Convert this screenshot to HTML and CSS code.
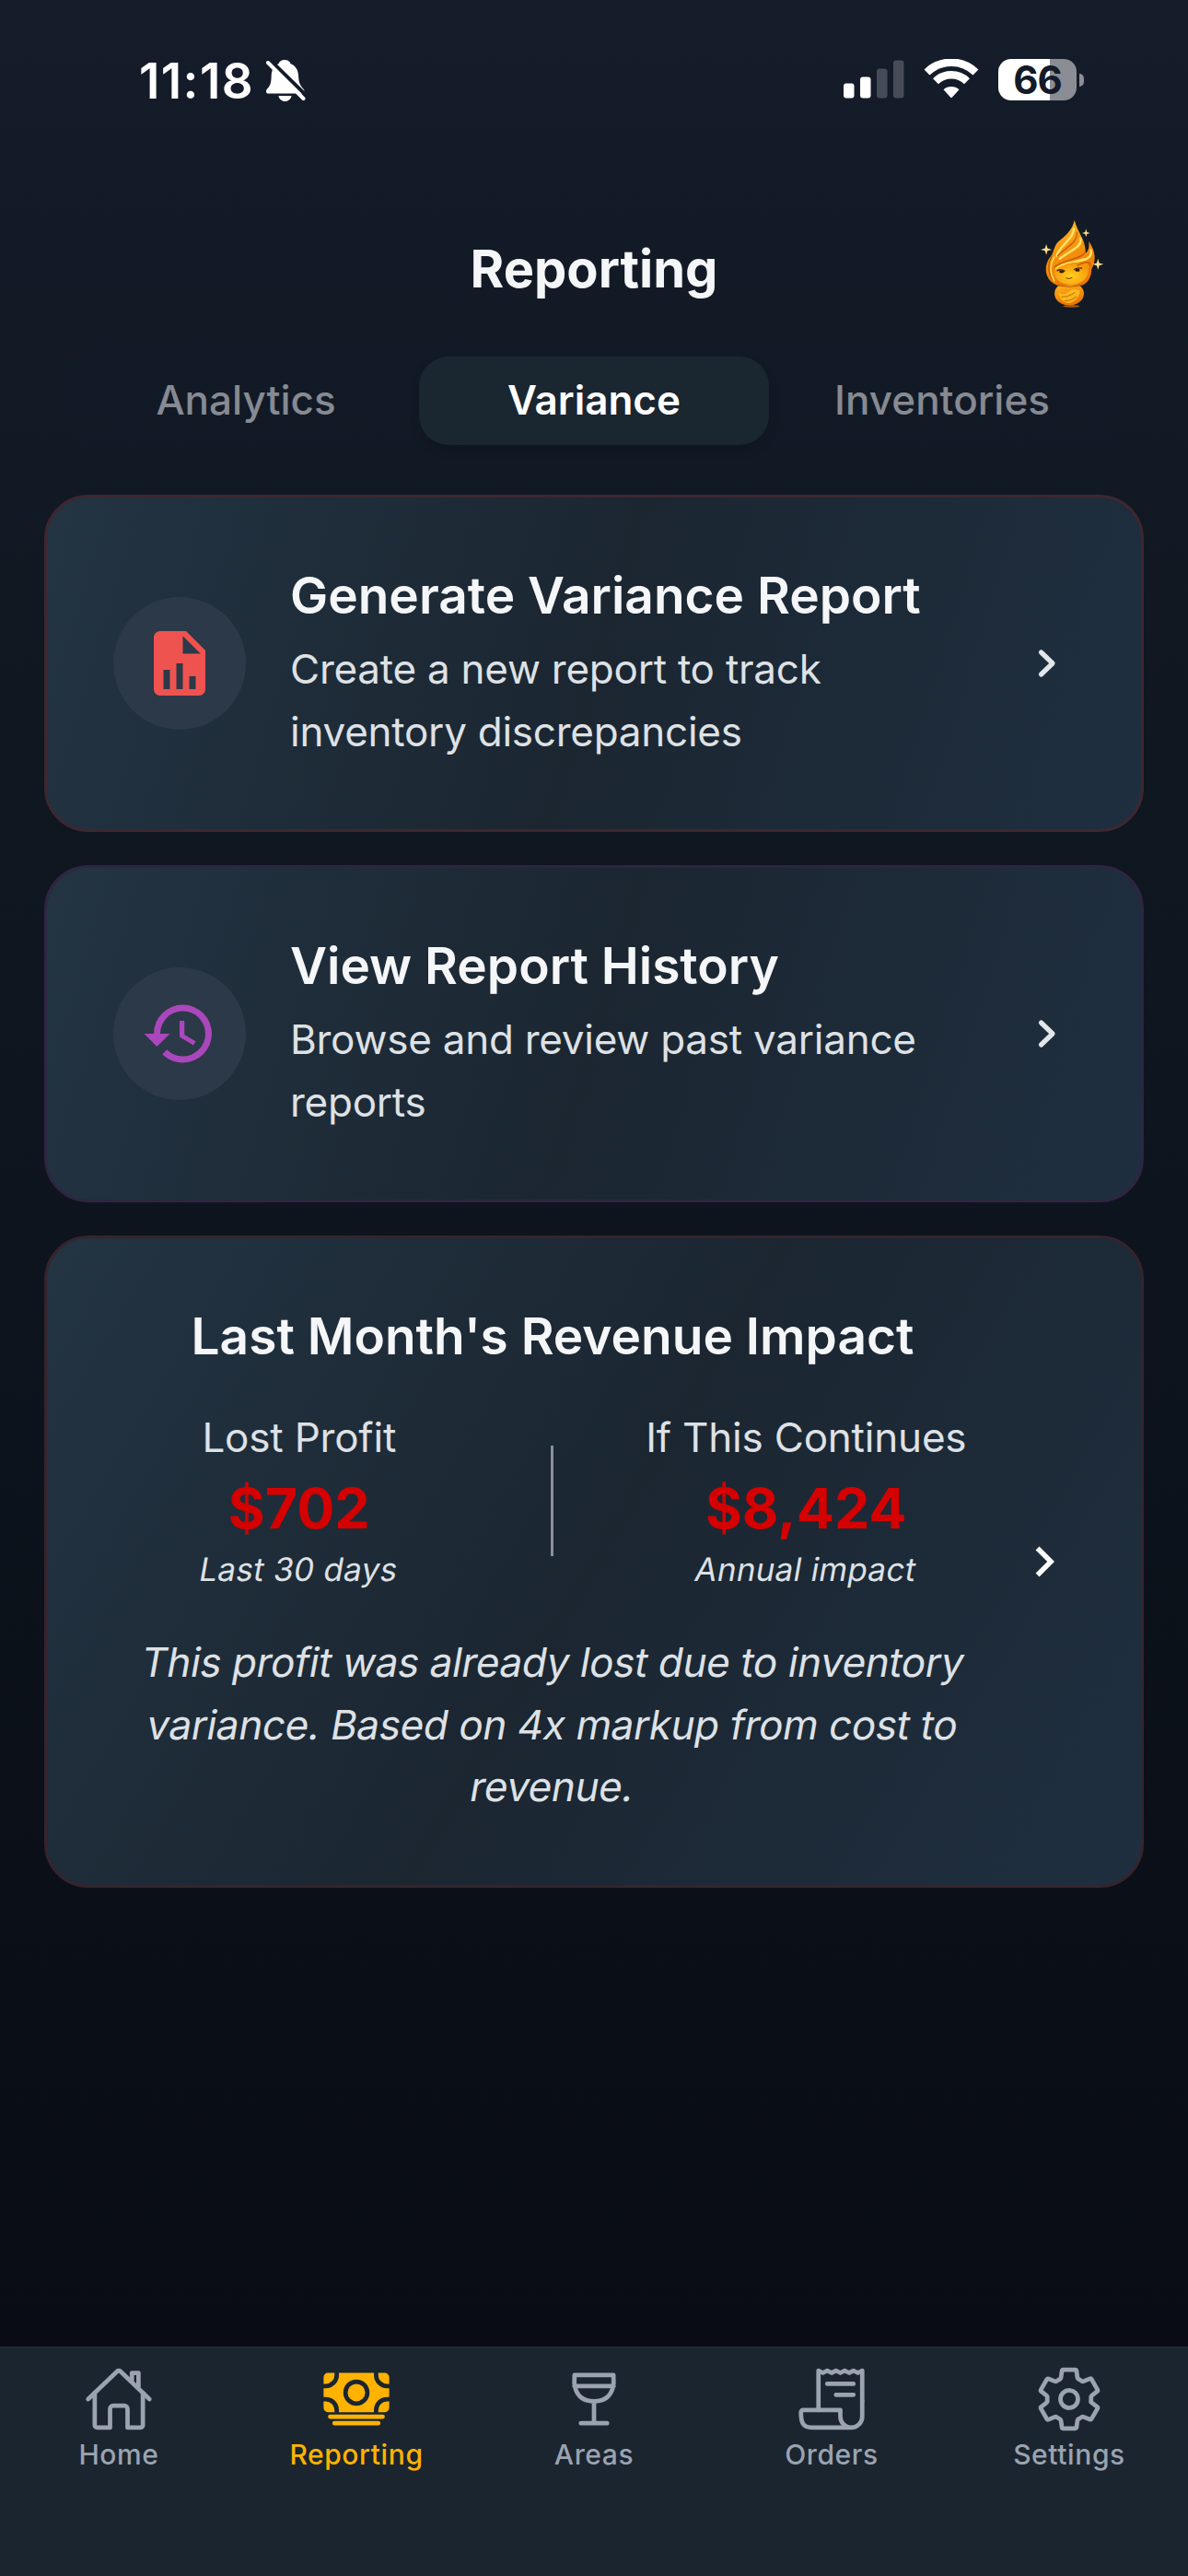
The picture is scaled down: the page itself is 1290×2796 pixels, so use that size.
FILE: index.html
```html
<!DOCTYPE html>
<html lang="en">
<head>
<meta charset="utf-8">
<title>Reporting</title>
<link rel="stylesheet" href="styles.css">
</head>
<body>
<div class="status">
  <div class="status-left">
    <span class="time">11:18</span>
    <svg class="bell" viewBox="0 0 44 48" width="44" height="48">
      <path fill="#fff" d="M21 1c3.500 0 6 1.800 6.600 4.200 5 1.800 8.100 6.500 8.400 12.300.3 9 2.500 11.500 5 14.500 1.300 1.600 1.500 2.200 1.500 3.200 0 1.500-1 2.300-2.500 2.300H3.500C1.800 37.500 1 36.600 1 35.200c0-1.200.4-2 1.700-3.400C5.500 28.800 6.500 26 6.700 17.500 7 11.500 9.700 7 14.500 5.200 15.100 2.800 17.600 1 21 1zM14.500 40h14c-.6 3.600-3.400 6-7 6s-6.400-2.400-7-6z"/>
      <path d="M4 0 46 41" stroke="#141b28" stroke-width="4"/>
      <path d="M3 4 41.500 43" stroke="#fff" stroke-width="4" stroke-linecap="round"/>
    </svg>
  </div>
  <div class="status-right">
    <svg class="signal" viewBox="0 0 66 42" width="66" height="42">
      <rect x="0" y="25.500" width="11.500" height="16" rx="3" fill="#fff"/>
      <rect x="18" y="18.500" width="11.500" height="23" rx="3" fill="#fff"/>
      <rect x="36" y="9.500" width="11.500" height="32" rx="3" fill="#464c57"/>
      <rect x="54" y=".5" width="11.500" height="41" rx="3" fill="#464c57"/>
    </svg>
    <svg class="wifi" viewBox="0 0 60 44" width="60" height="44">
      <g fill="none" stroke="#fff">
        <path d="M3.500 14.500A38 38 0 0 1 56.500 14.500" stroke-width="8.500"/>
        <path d="M13 24.200A24.500 24.500 0 0 1 47 24.200" stroke-width="8.500"/>
      </g>
      <path d="M21.500 33.300A12.500 12.500 0 0 1 38.500 33.300L31 41.600Q30 42.600 29 41.600Z" fill="#fff"/>
    </svg>
    <div class="battery"><div class="cell">66</div><div class="nub"></div></div>
  </div>
</div>

<header class="header">
  <h1 class="title">Reporting</h1>
  <svg class="mascot" viewBox="60 40 210 310" width="70" height="103">
    <defs>
      <linearGradient id="fire" x1="0" y1="0" x2=".3" y2="1"><stop offset="0" stop-color="#ffc53a"/><stop offset=".45" stop-color="#f99a10"/><stop offset="1" stop-color="#e87705"/></linearGradient>
      <radialGradient id="skin" cx=".5" cy=".6" r=".6"><stop offset="0" stop-color="#ffcf1e"/><stop offset="1" stop-color="#f4960b"/></radialGradient>
    </defs>
    <ellipse cx="160" cy="333" rx="28" ry="4" fill="#a85a08"/>
    <ellipse cx="153" cy="292" rx="48" ry="38" fill="url(#fire)"/>
    <path fill="#ffcb2a" d="M118 286C130 300 142 292 154 284 166 276 178 276 188 284 186 304 170 322 152 324 132 320 118 306 118 286Z" opacity=".7"/>
    <path fill="none" stroke="#c96a06" stroke-width="3" d="M126 302Q146 306 172 288M138 316Q158 316 178 302"/>
    <path fill="url(#fire)" d="M170 52C164 84 140 104 120 120 104 134 104 150 96 166 78 186 70 216 84 240 92 254 106 264 122 266L196 264C214 256 226 238 226 212 240 188 242 156 217 121 220 142 214 154 206 160 208 118 184 100 170 52Z"/>
    <path fill="url(#skin)" d="M106 208C124 200 180 190 214 192 222 226 212 258 158 264 118 260 98 240 106 208Z"/>
    <g fill="none" stroke-linecap="round">
      <path stroke="#ffe36a" stroke-width="7" d="M168 80C166 116 122 134 112 168M190 112C196 142 152 152 122 178M224 150C230 180 196 184 168 188"/>
      <path stroke="#c65a04" stroke-width="4" d="M178 92C182 126 140 142 116 168M204 158C190 182 136 178 106 204M96 168C82 196 84 226 98 244M222 200C220 184 200 190 180 200"/>
      <path stroke="#ffdc50" stroke-width="5" d="M104 172C90 196 88 222 104 250M202 178C176 190 132 188 110 210"/>
      <path stroke="#b85a06" stroke-width="3" d="M116 266Q155 274 192 265"/>
      <path stroke="#4a2204" stroke-width="4" d="M114 217Q124 210 138 218M169 213Q180 206 194 209"/>
      <path stroke="#7a3404" stroke-width="3" d="M143 241Q153 247 162 240"/>
    </g>
    <ellipse cx="128" cy="220" rx="8" ry="5" fill="#3c1c05"/><ellipse cx="180" cy="215" rx="8" ry="5" fill="#3c1c05"/>
    <path fill="#ffe08a" d="M208 81l3 10 10 3-10 3-3 10-3-10-10-3 10-3zM78 130l4 14 14 4-14 4-4 14-4-14-14-4 14-4zM247 178l4 14 14 4-14 4-4 14-4-14-14-4 14-4z"/>
  </svg>
</header>

<nav class="tabs">
  <div class="tab">Analytics</div>
  <div class="tab active">Variance</div>
  <div class="tab">Inventories</div>
</nav>

<main class="cards">
  <section class="card red">
    <div class="disc"><svg viewBox="0 0 24 24" width="84" height="84" fill="#ef5350"><path d="M13,9H18.500L13,3.500V9M6,2H14L20,8V20A2,2 0 0,1 18,22H6C4.890,22 4,21.100 4,20V4C4,2.890 4.890,2 6,2M7,20H9V14H7V20M11,20H13V12H11V20M15,20H17V16H15V20Z"/></svg></div>
    <div class="copy">
      <h2 class="card-title">Generate Variance Report</h2>
      <p class="desc">Create a new report to track<br>inventory discrepancies</p>
    </div>
    <svg class="chev" viewBox="0 0 66 66" width="66" height="66"><path d="M29.500 21 42 33 29.500 45" fill="none" stroke="#e3e6ea" stroke-width="5.200" stroke-linecap="round" stroke-linejoin="round"/></svg>
  </section>

  <section class="card purple">
    <div class="disc"><svg viewBox="0 0 24 24" width="84" height="84" fill="#ab47bc"><path d="M13.500,8H12V13L16.280,15.540L17,14.330L13.500,12.250V8M13,3A9,9 0 0,0 4,12H1L4.960,16.030L9,12H6A7,7 0 0,1 13,5A7,7 0 0,1 20,12A7,7 0 0,1 13,19C11.070,19 9.320,18.210 8.060,16.940L6.640,18.360C8.270,20 10.500,21 13,21A9,9 0 0,0 22,12A9,9 0 0,0 13,3"/></svg></div>
    <div class="copy">
      <h2 class="card-title">View Report History</h2>
      <p class="desc">Browse and review past variance<br>reports</p>
    </div>
    <svg class="chev" viewBox="0 0 66 66" width="66" height="66"><path d="M29.500 21 42 33 29.500 45" fill="none" stroke="#e3e6ea" stroke-width="5.200" stroke-linecap="round" stroke-linejoin="round"/></svg>
  </section>

  <section class="card impact">
    <div class="impact-body">
      <h2 class="card-title">Last Month's Revenue Impact</h2>
      <div class="stats">
        <div class="stat">
          <div class="label">Lost Profit</div>
          <div class="value">$702</div>
          <div class="period"><span class="slant">Last 30 days</span></div>
        </div>
        <div class="rule"></div>
        <div class="stat">
          <div class="label">If This Continues</div>
          <div class="value">$8,424</div>
          <div class="period"><span class="slant">Annual impact</span></div>
        </div>
      </div>
      <p class="note"><span class="slant">This profit was already lost due to inventory</span><br><span class="slant">variance. Based on 4x markup from cost to</span><br><span class="slant">revenue.</span></p>
    </div>
    <svg class="chev" viewBox="0 0 24 24" width="66" height="66" fill="#fff"><path d="M8.590,16.580L13.170,12L8.590,7.410L10,6L16,12L10,18L8.590,16.580Z"/></svg>
  </section>
</main>

<footer class="tabbar">
  <div class="item">
    <svg class="icon" viewBox="0 0 512 512"><path d="M80 212v236a16 16 0 0016 16h96V328a24 24 0 0124-24h80a24 24 0 0124 24v136h96a16 16 0 0016-16V212"/><path d="M480 256L266.890 52c-5-5.280-16.690-5.340-21.780 0L32 256M400 179V64h-48v69"/></svg>
    <span class="name">Home</span>
  </div>
  <div class="item on">
    <svg class="icon solid" viewBox="0 0 512 512"><path d="M448 400H64a16 16 0 010-32h384a16 16 0 010 32zM416 448H96a16 16 0 010-32h320a16 16 0 010 32zM32 272H16v48a32 32 0 0032 32h48v-16a64.070 64.070 0 00-64-64z"/><path d="M480 240h16v-64h-16a96.110 96.110 0 01-96-96V64H128v16a96.110 96.110 0 01-96 96H16v64h16a96.110 96.110 0 0196 96v16h256v-16a96.110 96.110 0 0196-96zm-224 64a96 96 0 1196-96 96.110 96.110 0 01-96 96z"/><circle cx="256" cy="208" r="64"/><path d="M416 336v16h48a32 32 0 0032-32v-48h-16a64.070 64.070 0 00-64 64zM480 144h16V96a32 32 0 00-32-32h-48v16a64.070 64.070 0 0064 64zM96 80V64H48a32 32 0 00-32 32v48h16a64.070 64.070 0 0064-64z"/></svg>
    <span class="name">Reporting</span>
  </div>
  <div class="item">
    <svg class="icon" viewBox="0 0 512 512"><path d="M398.570 80H113.430v16S87.510 272 256 272 398.570 96 398.570 96zM256 272v160M352 432H160M112 160h288"/></svg>
    <span class="name">Areas</span>
  </div>
  <div class="item">
    <svg class="icon" viewBox="0 0 512 512"><path d="M160 336V48l32 16 32-16 31.940 16 32.370-16L320 64l31.790-16 31.930 16L416 48l32.010 16L480 48v224"/><path d="M480 272v112a80 80 0 01-80 80h0a80 80 0 01-80-80v-48H48a15.860 15.860 0 00-16 16c0 64 6.740 112 80 112h288M224 144h192M288 224h128"/></svg>
    <span class="name">Orders</span>
  </div>
  <div class="item">
    <svg class="icon" viewBox="0 0 512 512"><path d="M262.290 192.310a64 64 0 1057.400 57.400 64.130 64.130 0 00-57.400-57.400zM416.390 256a154.340 154.340 0 01-1.530 20.790l45.210 35.460a10.810 10.810 0 012.450 13.750l-42.770 74a10.810 10.810 0 01-13.140 4.590l-44.900-18.080a16.110 16.110 0 00-15.170 1.750A164.480 164.480 0 01325 400.800a15.940 15.940 0 00-8.820 12.140l-6.730 47.890a11.080 11.080 0 01-10.680 9.170h-85.540a11.110 11.110 0 01-10.690-8.870l-6.720-47.820a16.070 16.070 0 00-9-12.220 155.300 155.300 0 01-21.460-12.570 16 16 0 00-15.110-1.710l-44.890 18.070a10.810 10.810 0 01-13.140-4.580l-42.770-74a10.800 10.800 0 012.450-13.750l38.210-30a16.050 16.050 0 006-14.080c-.36-4.170-.58-8.330-.58-12.500s.21-8.270.58-12.350a16 16 0 00-6.070-13.940l-38.190-30A10.810 10.810 0 0149.480 186l42.770-74a10.810 10.810 0 0113.140-4.590l44.900 18.080a16.110 16.110 0 0015.170-1.750A164.480 164.480 0 01187 111.200a15.940 15.940 0 008.820-12.140l6.730-47.890A11.080 11.080 0 01213.230 42h85.540a11.110 11.110 0 0110.690 8.870l6.720 47.820a16.070 16.070 0 009 12.220 155.300 155.300 0 0121.460 12.570 16 16 0 0015.110 1.710l44.890-18.070a10.810 10.810 0 0113.140 4.580l42.770 74a10.800 10.800 0 01-2.450 13.750l-38.210 30a16.050 16.050 0 00-6.050 14.080c.33 4.140.55 8.300.55 12.470z"/></svg>
    <span class="name">Settings</span>
  </div>
</footer>
</body>
</html>
```

FILE: styles.css
```css
* { box-sizing: border-box; margin: 0; }

body {
  width: 1290px;
  height: 2796px;
  display: flex;
  flex-direction: column;
  overflow: hidden;
  background: linear-gradient(180deg, #151c2a 0%, #0f1720 30%, #0d141d 50%, #090c14 90%);
  color: #f5f6f8;
  font-family: Inter, "Liberation Sans", sans-serif;
}

/* status bar */
.status {
  height: 176px;
  display: flex;
  justify-content: space-between;
  padding: 64px 113px 0 151px;
}
.status-left, .status-right { display: flex; }
.status-left { gap: 12px; }
.time { font-size: 53px; line-height: 48px; font-weight: 600; color: #fff; letter-spacing: 1.4px; }
.signal { margin: 1px 21px 0 0; }
.wifi { margin-right: 21px; }
.battery { display: flex; align-items: center; gap: 3px; height: 45px; }
.cell {
  width: 85px;
  height: 45px;
  border-radius: 14px;
  background: linear-gradient(90deg, #fff 56px, #8b8d94 56px);
  color: #141b28;
  font-size: 42px;
  line-height: 46px;
  font-weight: 700;
  letter-spacing: -1px;
  text-align: center;
}
.nub { width: 5px; height: 14px; border-radius: 0 7px 7px 0; background: #8b8d94; }

/* header */
.header {
  height: 200px;
  display: grid;
  grid-template-columns: 1fr auto 1fr;
  align-items: center;
  padding: 0 90px;
}
.title { grid-column: 2; font-size: 56px; line-height: 68px; font-weight: 700; margin-top: 32px; color: #f5f6f8; }
.mascot { justify-self: end; margin-top: 20px; }

/* segmented tabs */
.tabs {
  display: grid;
  grid-template-columns: repeat(3, 1fr);
  margin: 0 75px;
  height: 119px;
  padding: 11px 3px 12px;
  border-radius: 36px;
  background: rgba(26, 36, 48, .12);
}
.tab {
  display: grid;
  place-items: center;
  padding-bottom: 2px;
  border-radius: 32px;
  color: #868a92;
  font-size: 44px;
  line-height: 54px;
  font-weight: 500;
}
.active { margin: 0 -1px; background: #1a2630; color: #fff; font-weight: 600; box-shadow: 0 6px 12px rgba(0, 0, 0, .12); }

/* cards */
.cards { display: flex; flex-direction: column; gap: 36px; padding: 42px 48px 0; flex: 1; }
.card {
  height: 366px;
  display: flex;
  align-items: center;
  padding: 0 72px;
  border: 3px solid;
  border-radius: 48px;
  background: linear-gradient(107deg, #233443, #1b2631 50%, #1f2f40) border-box;
}
.red { border-color: #3e2730; }
.purple { border-color: #2f2542; }
.disc {
  width: 144px;
  height: 144px;
  flex: none;
  display: grid;
  place-items: center;
  border-radius: 50%;
  background: #2c3948;
}
.copy { flex: 1; margin-left: 48px; }
.card-title { font-size: 55px; line-height: 68px; font-weight: 600; white-space: nowrap; }
.desc { margin-top: 13px; font-size: 44px; line-height: 67.5px; letter-spacing: -0.25px; color: #dee1e5; white-space: nowrap; }
.chev { flex: none; }

.impact {
  height: 708px;
  border-color: #36242c;
  background: linear-gradient(120.6deg, #233443, #1b2631 50%, #1f2f40) border-box;
}
.impact-body { width: 954px; margin-right: 24px; text-align: center; }
.stats { display: flex; align-items: center; margin: 49px 0 47px; }
.stat { flex: 1; }
.rule { width: 3px; height: 120px; margin: 0 73px 0 71px; background: #8a8f9b; }
.label { font-size: 44px; line-height: 54px; letter-spacing: -0.2px; color: #dee1e5; }
.value { margin-top: 14px; font-size: 61px; line-height: 72px; font-weight: 700; color: #d50000; }
.period { margin-top: 9px; font-size: 35px; line-height: 42px; letter-spacing: 0.3px; color: #dee1e5; }
.note { font-size: 44px; line-height: 67.5px; letter-spacing: -0.4px; color: #dee1e5; white-space: nowrap; }
/* obliqued upright letterforms instead of the cursive italic face */
.slant { display: inline-block; transform: skewX(-10deg); }

/* bottom bar */
.tabbar {
  height: 249px;
  display: grid;
  grid-template-columns: repeat(5, 1fr);
  border-top: 1px solid #27323c;
  background: #1a2530;
}
.item {
  display: flex;
  flex-direction: column;
  align-items: center;
  padding-top: 18px;
  color: #9ba3b0;
  font-size: 30px;
  line-height: 36px;
  font-weight: 500;
}
.name { margin-top: 4px; letter-spacing: 0.6px; }
.on { color: #ffb300; }
.icon { width: 76px; height: 76px; fill: none; stroke: currentColor; stroke-width: 32; stroke-linecap: round; stroke-linejoin: round; }
.solid { fill: currentColor; stroke: none; }
```
